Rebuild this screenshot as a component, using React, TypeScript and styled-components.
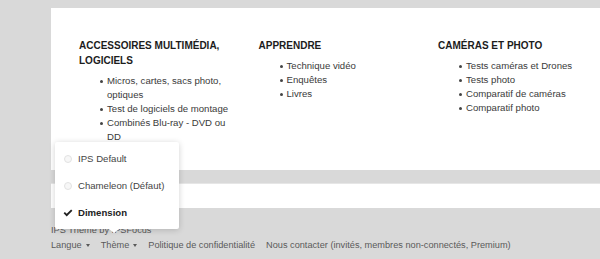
import React from "react";
import styled, { createGlobalStyle } from "styled-components";

const GlobalStyle = createGlobalStyle`
    html, body {
        margin: 0;
        padding: 0;
        background: #d9d9d9;
        font-family: "Liberation Sans", Arial, Helvetica, sans-serif;
        -webkit-font-smoothing: antialiased;
    }
`;

const Page = styled.div`
    position: relative;
    width: 600px;
    height: 259px;
    overflow: hidden;
    padding: 8px 0 0 51px;
    box-sizing: border-box;
`;

const Panel = styled.div`
    background: #fff;
    height: 162px;
    box-sizing: border-box;
    padding: 30px 0 0 28px;
    display: grid;
    grid-template-columns: repeat(3, 160px);
    column-gap: 19.5px;
    align-items: start;
`;

const Column = styled.div`
    display: flex;
    flex-direction: column;
`;

const Heading = styled.h3`
    margin: 0;
    font-size: 10px;
    line-height: 15px;
    font-weight: 700;
    color: #1c1c1c;
    text-transform: uppercase;
`;

const List = styled.ul`
    margin: 6px 0 0;
    padding-left: 28px;
    list-style: none;
`;

const Item = styled.li`
    position: relative;
    font-size: 9.6px;
    line-height: 14px;
    color: #3a3a3a;
    &::before {
        content: "";
        position: absolute;
        left: -7px;
        top: 6px;
        width: 3px;
        height: 3px;
        border-radius: 50%;
        background: #444;
    }
`;

const Strip = styled.div`
    margin-top: 13px;
    height: 25px;
    background: #fff;
    border-top: 1px solid #e6e6e6;
    box-sizing: border-box;
`;

const Footer = styled.div`
    padding-top: 16px;
    color: #595959;
    font-size: 9.2px;
`;

const Credit = styled.div`
    line-height: 13px;
`;

const Links = styled.div`
    display: flex;
    gap: 11px;
    line-height: 14px;
    margin-top: 1px;
`;

const FooterLink = styled.span`
    display: inline-flex;
    align-items: center;
`;

const Caret = styled.span`
    display: inline-block;
    margin-left: 4px;
    width: 0;
    height: 0;
    border-left: 2.5px solid transparent;
    border-right: 2.5px solid transparent;
    border-top: 3px solid #595959;
`;

const Menu = styled.div`
    position: absolute;
    left: 55px;
    top: 142px;
    width: 124px;
    padding: 3px 0;
    background: #fff;
    border-radius: 2px;
    box-shadow: 0 1px 6px rgba(0, 0, 0, 0.18);
    &::after {
        content: "";
        position: absolute;
        left: 54px;
        bottom: -4px;
        width: 0;
        height: 0;
        border-left: 5px solid transparent;
        border-right: 5px solid transparent;
        border-top: 4px solid #fff;
    }
`;

const MenuItem = styled.div<{ $active?: boolean }>`
    display: flex;
    align-items: center;
    height: 27px;
    padding-left: 8px;
    font-size: 9.6px;
    color: ${(p) => (p.$active ? "#222" : "#444")};
    font-weight: ${(p) => (p.$active ? 700 : 400)};
`;

const Mark = styled.span`
    display: inline-flex;
    align-items: center;
    justify-content: center;
    width: 10px;
    margin-right: 5px;
`;

const Radio = styled.span`
    width: 6px;
    height: 6px;
    border-radius: 50%;
    border: 1px solid #e2e2e2;
    background: #f7f7f7;
`;

const Check = () => (
    <svg width="10" height="8" viewBox="0 0 10 8">
        <path d="M0.6 4.3 L1.9 3 L3.7 4.8 L8.1 0.4 L9.4 1.7 L3.7 7.4 Z" fill="#222" />
    </svg>
);

const columns = [
    {
        title: "Accessoires multimédia, logiciels",
        items: [
            "Micros, cartes, sacs photo, optiques",
            "Test de logiciels de montage",
            "Combinés Blu-ray - DVD ou DD",
        ],
    },
    {
        title: "Apprendre",
        items: ["Technique vidéo", "Enquêtes", "Livres"],
    },
    {
        title: "Caméras et photo",
        items: [
            "Tests caméras et Drones",
            "Tests photo",
            "Comparatif de caméras",
            "Comparatif photo",
        ],
    },
];

const themes = [
    { name: "IPS Default", active: false },
    { name: "Chameleon (Défaut)", active: false },
    { name: "Dimension", active: true },
];

export default function App() {
    return (
        <>
            <GlobalStyle />
            <Page>
                <Panel>
                    {columns.map((col) => (
                        <Column key={col.title}>
                            <Heading>{col.title}</Heading>
                            <List>
                                {col.items.map((it) => (
                                    <Item key={it}>{it}</Item>
                                ))}
                            </List>
                        </Column>
                    ))}
                </Panel>
                <Strip />
                <Footer>
                    <Credit>IPS Theme by IPSFocus</Credit>
                    <Links>
                        <FooterLink>
                            Langue <Caret />
                        </FooterLink>
                        <FooterLink>
                            Thème <Caret />
                        </FooterLink>
                        <FooterLink>Politique de confidentialité</FooterLink>
                        <FooterLink>
                            Nous contacter (invités, membres non-connectés, Premium)
                        </FooterLink>
                    </Links>
                </Footer>
                <Menu>
                    {themes.map((t) => (
                        <MenuItem key={t.name} $active={t.active}>
                            <Mark>{t.active ? <Check /> : <Radio />}</Mark>
                            {t.name}
                        </MenuItem>
                    ))}
                </Menu>
            </Page>
        </>
    );
}
